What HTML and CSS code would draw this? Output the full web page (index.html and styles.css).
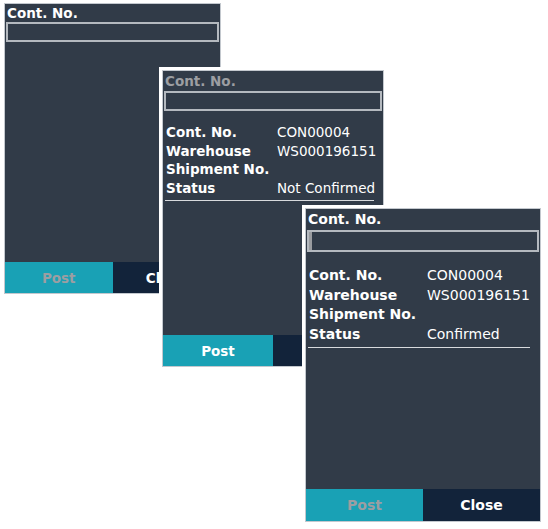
FILE: index.html
```html
<!DOCTYPE html>
<html lang="en">
<head>
    <meta charset="UTF-8">
    <meta name="viewport" content="width=device-width, initial-scale=1">
    <title>Container Confirmation</title>
    <link rel="stylesheet" href="styles.css">
</head>
<body>
    <div class="desk">
        <div class="screen screen-one">
            <div class="field-label">Cont. No.</div>
            <div class="scan-box"></div>
            <div class="spacer"></div>
            <div class="footer">
                <button class="btn btn-post is-disabled">Post</button>
                <button class="btn btn-close">Close</button>
            </div>
        </div>

        <div class="screen screen-two">
            <div class="field-label is-muted">Cont. No.</div>
            <div class="scan-box"></div>
            <dl class="details">
                <dt>Cont. No.</dt><dd>CON00004</dd>
                <dt>Warehouse</dt><dd>WS000196151</dd>
                <dt>Shipment No.</dt><dd></dd>
                <dt>Status</dt><dd>Not Confirmed</dd>
            </dl>
            <div class="spacer"></div>
            <div class="footer">
                <button class="btn btn-post">Post</button>
                <button class="btn btn-close">Close</button>
            </div>
        </div>

        <div class="screen screen-three">
            <div class="field-label">Cont. No.</div>
            <div class="scan-box"><span class="caret"></span></div>
            <dl class="details">
                <dt>Cont. No.</dt><dd>CON00004</dd>
                <dt>Warehouse</dt><dd>WS000196151</dd>
                <dt>Shipment No.</dt><dd></dd>
                <dt>Status</dt><dd>Confirmed</dd>
            </dl>
            <div class="spacer"></div>
            <div class="footer">
                <button class="btn btn-post is-disabled">Post</button>
                <button class="btn btn-close">Close</button>
            </div>
        </div>
    </div>
</body>
</html>
```

FILE: styles.css
```css
* { box-sizing: border-box; }
body {
    margin: 0;
    background: #fff;
    font-family: 'DejaVu Sans', Verdana, sans-serif;
}
.desk {
    position: relative;
    width: 548px;
    height: 529px;
}
/* each screen is a window placed on the canvas */
.screen {
    position: absolute;
    display: flex;
    flex-direction: column;
    background: #313b48;
    border: 1px solid #c3c8ce;
    box-shadow: 0 0 0 3px #fff;
    color: #fff;
}
.screen-one {
    left: 4px;
    top: 3px;
    width: 217px;
    height: 291px;
    font-size: 13.5px;
    box-shadow: none;
}
.screen-two {
    left: 162px;
    top: 70px;
    width: 222px;
    height: 297px;
    font-size: 13.5px;
}
.screen-three {
    left: 305px;
    top: 208px;
    width: 236px;
    height: 314px;
    font-size: 14px;
}
.field-label {
    font-weight: bold;
    padding: 1px 2px 0;
    height: 18px;
    line-height: 16px;
}
.screen-two .field-label { height: 20px; line-height: 16px; padding-top: 2px; }
.screen-three .field-label { height: 21px; line-height: 18px; }
.field-label.is-muted { color: #9c9ea2; }
.scan-box {
    margin: 0 1px;
    height: 20px;
    border: 2px solid #b4b9bf;
    background: #313b48;
    position: relative;
}
.screen-three .scan-box { height: 22px; }
.caret {
    position: absolute;
    left: 0;
    top: 0;
    bottom: 0;
    width: 3px;
    background: #9a9ca0;
}
.details {
    display: grid;
    margin: 0;
    padding-bottom: 2px;
    border-bottom: 1px solid #d8dadd;
}
.screen-two .details {
    grid-template-columns: 111px 1fr;
    grid-auto-rows: 18.6px;
    margin: 13px 9px 0 2px;
    padding-left: 1px;
}
.screen-three .details {
    grid-template-columns: 118px 1fr;
    grid-auto-rows: 19.6px;
    margin: 15px 10px 0 2px;
    padding-left: 1px;
}
.details dt {
    font-weight: bold;
}
.details dd {
    margin: 0;
}
.spacer { flex: 1; }
.footer {
    display: grid;
    grid-template-columns: 1fr 1fr;
    height: 31px;
}
.screen-three .footer { height: 32px; }
.btn {
    border: none;
    margin: 0;
    padding: 0;
    font-family: inherit;
    font-size: inherit;
    font-weight: bold;
    color: #fff;
}
.btn-post { background: #19a1b5; }
.btn-post.is-disabled { color: #9c9ea2; }
.btn-close { background: #12233a; }
```
